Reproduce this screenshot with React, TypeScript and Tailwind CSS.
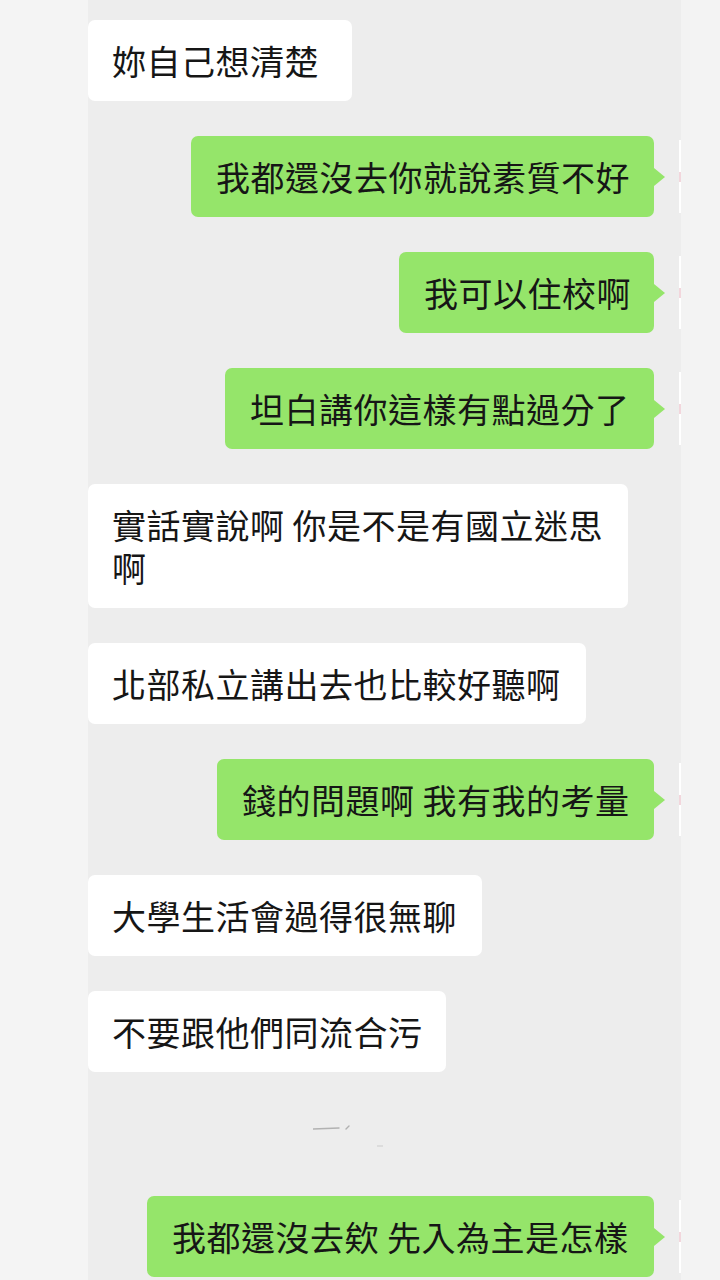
const FONT = "font-['Noto_Sans_CJK_TC','Noto_Sans_CJK_SC',sans-serif]";

type Msg = { text: string; mine: boolean; w: number };

const messages: Msg[] = [
  { text: '妳自己想清楚', mine: false, w: 264 },
  { text: '我都還沒去你就說素質不好', mine: true, w: 463 },
  { text: '我可以住校啊', mine: true, w: 255 },
  { text: '坦白講你這樣有點過分了', mine: true, w: 429 },
  { text: '實話實說啊 你是不是有國立迷思啊', mine: false, w: 540 },
  { text: '北部私立講出去也比較好聽啊', mine: false, w: 498 },
  { text: '錢的問題啊 我有我的考量', mine: true, w: 437 },
  { text: '大學生活會過得很無聊', mine: false, w: 394 },
  { text: '不要跟他們同流合污', mine: false, w: 358 },
];

const last: Msg = { text: '我都還沒去欸 先入為主是怎樣', mine: true, w: 507 };

const Bubble = ({ msg }: { msg: Msg }) => {
  if (!msg.mine) {
    return (
      <div className="flex">
        <div
          className="rounded-[7px] bg-white py-[19px] pl-[24px] pr-[14px] text-[34px] leading-[43px] tracking-[0.5px] text-[#161616]"
          style={{ width: msg.w }}
        >
          {msg.text}
        </div>
      </div>
    );
  }
  return (
    <div className="flex items-stretch justify-end">
      <div
        className="relative rounded-[7px] bg-[#95e56a] py-[19px] pl-[25px] pr-[14px] text-[34px] leading-[43px] tracking-[0.5px] whitespace-nowrap text-[#161616]"
        style={{ width: msg.w }}
      >
        {msg.text}
        <span className="absolute top-1/2 right-[-11px] -translate-y-1/2 border-y-[9px] border-l-[11px] border-y-transparent border-l-[#95e56a]" />
      </div>
      <div className="ml-[24px] flex w-[3px] flex-col items-center py-[4px]">
        <div className="w-[2px] flex-1 bg-white" />
        <div className="h-[10px] w-[2px] bg-[#f2d6dc]" />
        <div className="w-[2px] flex-1 bg-white" />
      </div>
    </div>
  );
};

export default function App() {
  return (
    <div className={`flex h-[1280px] w-[720px] overflow-hidden ${FONT}`}>
      <div className="w-[88px] bg-[#f4f4f4]" />
      <main className="flex w-[593px] flex-col gap-[35px] bg-[#ededed] pt-[20px]">
        {messages.map((m, i) => (
          <Bubble key={i} msg={m} />
        ))}
        <div className="flex h-[89px] items-start pl-[225px] pt-[18px]">
          <svg width="70" height="24" viewBox="0 0 70 24">
            <path d="M0 4 L26 3" stroke="#9a9a9a" strokeWidth="1.4" strokeLinecap="round" opacity="0.7" />
            <path d="M33 4 L36 1" stroke="#8a8a8a" strokeWidth="1.4" strokeLinecap="round" opacity="0.6" />
            <path d="M64 21 L70 21" stroke="#c4c4c4" strokeWidth="1.4" opacity="0.6" />
          </svg>
        </div>
        <div className="-mt-[35px]">
          <Bubble msg={last} />
        </div>
      </main>
      <div className="flex-1 bg-[#f3f3f3]" />
    </div>
  );
}
